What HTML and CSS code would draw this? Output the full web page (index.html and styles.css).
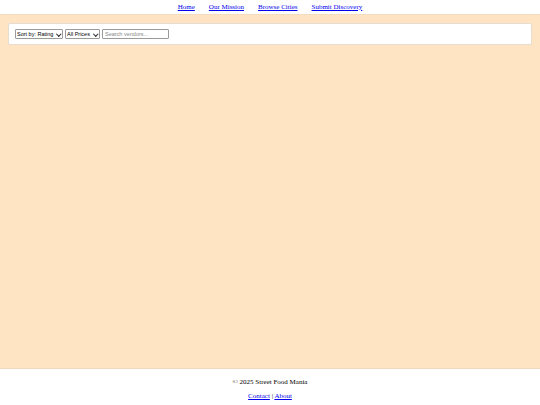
FILE: index.html
```html
<!DOCTYPE html>
<html lang="en">
<head>
  <meta charset="UTF-8" />
  <meta name="viewport" content="width=device-width, initial-scale=1">
  <title>Street Food Mania</title>
  <link rel="stylesheet" href="styles.css">
</head>
<body>
  <header class="site-header">
    <nav class="nav">
      <a href="#">Home</a>
      <a href="#">Our Mission</a>
      <a href="#">Browse Cities</a>
      <a href="#">Submit Discovery</a>
    </nav>
  </header>

  <main class="content">
    <div class="filters">
      <span class="select-wrap">
        <select class="filter-select sort">
          <option>Sort by: Rating</option>
          <option>Sort by: Name</option>
        </select>
      </span>
      <span class="select-wrap">
        <select class="filter-select price">
          <option>All Prices</option>
          <option>$</option>
          <option>$$</option>
        </select>
      </span>
      <input type="text" class="search" placeholder="Search vendors...">
    </div>
    <div id="vendors"></div>
  </main>

  <footer class="site-footer">
    <p>&copy; 2025 Street Food Mania</p>
    <p><a href="#">Contact</a> | <a href="#">About</a></p>
  </footer>
</body>
</html>
```

FILE: styles.css
```css
* { box-sizing: border-box; }
html, body { height: 100%; }
body {
  margin: 0;
  font-family: "Liberation Serif", "Times New Roman", serif;
  font-size: 7px;
  color: #000;
  background: #fff;
  display: flex;
  flex-direction: column;
}

/* header */
.site-header {
  background: #fff;
  padding: 3px 0 3px;
  border-bottom: 1px solid #f3dcc0;
}
.nav {
  display: flex;
  justify-content: center;
  gap: 14px;
  line-height: 8px;
}
.nav a { color: #0000ee; }

/* main */
.content {
  flex: 1;
  background: #ffe4c4;
  padding: 8px;
}
.filters {
  background: #fff;
  border: 1px solid #e6dcd0;
  border-radius: 2px;
  padding: 5px 6px;
  display: flex;
  align-items: center;
  gap: 2px;
}
.select-wrap {
  position: relative;
  display: inline-flex;
}
/* small chevron drawn over the select */
.select-wrap::after {
  content: '';
  position: absolute;
  right: 3px;
  top: 3px;
  width: 2.5px;
  height: 2.5px;
  border-right: 1px solid #222;
  border-bottom: 1px solid #222;
  transform: rotate(45deg);
  pointer-events: none;
}
.filter-select, .search {
  font-family: "Liberation Sans", Arial, sans-serif;
  font-size: 5.5px;
  height: 10px;
  margin: 0;
  border: 1px solid #9a9a9a;
  border-radius: 1px;
  background: #fff;
  color: #000;
}
.filter-select {
  appearance: none;
  -webkit-appearance: none;
  padding: 0 6px 0 1px;
}
.sort { width: 48px; }
.price { width: 35px; }
.search {
  width: 67px;
  padding: 0 2px;
}
.search::placeholder { color: #888; }

/* footer */
.site-footer {
  background: #fff;
  border-top: 1px solid #eed8bf;
  text-align: center;
  padding: 9px 0 5px;
  line-height: 8px;
}
.site-footer p { margin: 0; }
.site-footer p + p { margin-top: 6px; }
.site-footer a { color: #0000ee; }
```
